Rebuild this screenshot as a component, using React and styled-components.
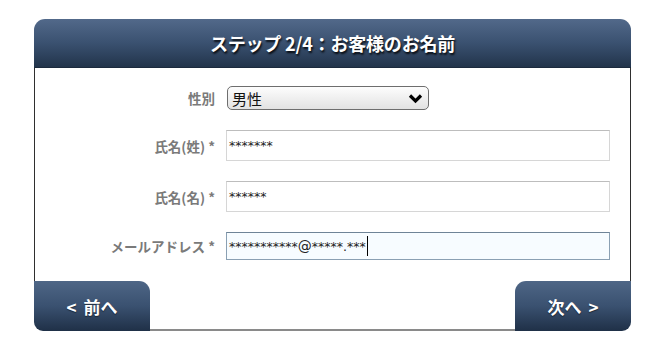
import React from "react";
import styled, { createGlobalStyle } from "styled-components";

const Global = createGlobalStyle`
  html, body { margin: 0; padding: 0; background: #fff; }
  body { font-family: "Noto Sans CJK JP", "Noto Sans", sans-serif; }
`;

const Page = styled.div`
  padding: 19px 0 0 34px;
`;

const Card = styled.div`
  width: 597px;
  display: flex;
  flex-direction: column;
`;

const Header = styled.div`
  height: 48px;
  border-radius: 11px 11px 0 0;
  background: linear-gradient(#52698a 0%, #3a5170 50%, #22344b 100%);
  display: flex;
  align-items: center;
  justify-content: center;
  color: #fff;
  font-weight: 700;
  font-size: 18px;
  letter-spacing: -0.2px;
  text-shadow: 1px 2px 2px rgba(0, 0, 0, 0.85);
  border-bottom: 1px solid #1b2a3d;
`;

const Body = styled.div`
  border-left: 1px solid #2f2f2f;
  border-right: 1px solid #2f2f2f;
  padding: 18px 0 21px;
  display: flex;
  flex-direction: column;
  gap: 20px;
`;

const Row = styled.div`
  display: grid;
  grid-template-columns: 180px 384px;
  column-gap: 11px;
  align-items: center;
`;

const Label = styled.label`
  text-align: right;
  font-size: 13.5px;
  font-weight: 700;
  color: #7a7a7a;
`;

const SelectBox = styled.div`
  height: 22px;
  border: 1px solid #6e6e6e;
  border-radius: 5px;
  background: linear-gradient(#fdfdfd, #e2e2e2);
  display: flex;
  align-items: center;
  justify-content: space-between;
  padding: 0 5px 0 4px;
  box-sizing: content-box;
  width: 191px;
  font-size: 15px;
  color: #111;
  margin-left: 1px;
`;

const Input = styled.div`
  height: ${(p) => p.$h}px;
  box-sizing: border-box;
  border: 1px solid ${(p) => (p.$focus ? "#8aa0b3" : "#d6d6d6")};
  border-top-color: ${(p) => (p.$focus ? "#6f8497" : "#bdbdbd")};
  background: ${(p) => (p.$focus ? "#f7fcff" : "#fff")};
  display: flex;
  align-items: center;
  padding-left: 2px;
  font-family: "DejaVu Sans", sans-serif;
  font-size: 12.5px;
  color: #222;
`;

const Caret = styled.span`
  display: inline-block;
  width: 1px;
  height: 20px;
  background: #000;
  margin-left: 1px;
`;

const At = styled.span`
  font-size: 14px;
`;

const Footer = styled.div`
  display: flex;
  height: 50px;
`;

const NavButton = styled.div`
  width: 116px;
  height: 50px;
  box-sizing: border-box;
  background: linear-gradient(#4e6686 0%, #3a5170 50%, #1f3047 100%);
  border-radius: ${(p) => (p.$side === "left" ? "0 11px 0 9px" : "11px 0 9px 0")};
  color: #fff;
  font-weight: 700;
  font-size: 17px;
  display: flex;
  align-items: center;
  justify-content: center;
  gap: 7px;
  text-shadow: 0 1px 1px rgba(0, 0, 0, 0.5);
`;

const Spacer = styled.div`
  flex: 1;
  border-bottom: 2px solid #8a8a8a;
`;

export default function App() {
  return (
    <>
      <Global />
      <Page>
        <Card>
          <Header>ステップ 2/4：お客様のお名前</Header>
          <Body>
            <Row>
              <Label>性別</Label>
              <SelectBox>
                <span>男性</span>
                <svg width="15" height="11" viewBox="0 0 15 11">
                  <path d="M2 2.5 L7.5 8 L13 2.5" fill="none" stroke="#000" strokeWidth="3.2" />
                </svg>
              </SelectBox>
            </Row>
            <Row>
              <Label>氏名(姓) *</Label>
              <Input $h={31}>*******</Input>
            </Row>
            <Row>
              <Label>氏名(名) *</Label>
              <Input $h={31}>******</Input>
            </Row>
            <Row>
              <Label>メールアドレス *</Label>
              <Input $h={28} $focus>
                ***********<At>@</At>*****.***<Caret />
              </Input>
            </Row>
          </Body>
          <Footer>
            <NavButton $side="left">
              <span>&lt;</span>
              <span>前へ</span>
            </NavButton>
            <Spacer />
            <NavButton $side="right">
              <span>次へ</span>
              <span>&gt;</span>
            </NavButton>
          </Footer>
        </Card>
      </Page>
    </>
  );
}
